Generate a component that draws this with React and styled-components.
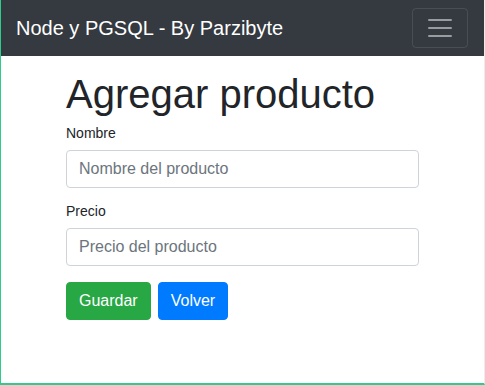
import React from "react";
import styled, { createGlobalStyle } from "styled-components";

const GlobalStyle = createGlobalStyle`
  * { box-sizing: border-box; }
  html, body { margin: 0; padding: 0; background: #fff; }
  body {
    font-family: "Liberation Sans", Arial, sans-serif;
    font-size: 16px;
    line-height: 1.5;
    color: #212529;
  }
`;

const Frame = styled.div`
  height: 385px;
  border-left: 1px solid #2ecc8a;
  border-bottom: 2px solid #2ecc8a;
  border-right: 1px solid #ececec;
`;

const NavBar = styled.nav`
  height: 56px;
  background-color: #343a40;
  padding: 8px 16px 8px 15px;
  display: flex;
  align-items: center;
  justify-content: space-between;
`;

const Brand = styled.a`
  color: #fff;
  font-size: 20px;
  line-height: 30px;
  text-decoration: none;
`;

const Toggler = styled.button`
  width: 56px;
  height: 40px;
  padding: 4px 12px;
  background: transparent;
  border: 1px solid rgba(255, 255, 255, 0.1);
  border-radius: 4px;
  display: flex;
  align-items: center;
  justify-content: center;
  svg { display: block; }
`;

const Main = styled.main`
  width: 353px;
  margin: 0 auto;
  padding-top: 14px;
`;

const Title = styled.h1`
  font-size: 40px;
  font-weight: 500;
  line-height: 48px;
  margin: 0 0 5px;
`;

const Group = styled.div`
  margin-bottom: 13px;
`;

const Label = styled.label`
  display: block;
  font-size: 14px;
  line-height: 21px;
  margin-bottom: 6px;
`;

const Input = styled.input`
  display: block;
  width: 100%;
  height: 38px;
  padding: 6px 12px;
  font-family: inherit;
  font-size: 16px;
  color: #495057;
  border: 1px solid #ced4da;
  border-radius: 4px;
  &::placeholder { color: #6c757d; }
`;

const Actions = styled.div`
  display: flex;
  gap: 7px;
  margin-top: 16px;
`;

const Button = styled.button`
  height: 38px;
  padding: 6px 12px;
  font-family: inherit;
  font-size: 16px;
  color: #fff;
  border: 1px solid ${(p) => p.$bg};
  background-color: ${(p) => p.$bg};
  border-radius: 4px;
`;

export default function App() {
  return (
    <>
      <GlobalStyle />
      <Frame>
        <NavBar>
          <Brand href="#">Node y PGSQL - By Parzibyte</Brand>
          <Toggler aria-label="menu">
            <svg width="30" height="30" viewBox="0 0 30 30">
              <path
                d="M4 7h22M4 15h22M4 23h22"
                stroke="rgba(255,255,255,0.5)"
                strokeWidth="2"
                strokeLinecap="round"
              />
            </svg>
          </Toggler>
        </NavBar>
        <Main>
          <Title>Agregar producto</Title>
          <form>
            <Group>
              <Label>Nombre</Label>
              <Input placeholder="Nombre del producto" />
            </Group>
            <Group>
              <Label>Precio</Label>
              <Input placeholder="Precio del producto" />
            </Group>
            <Actions>
              <Button type="button" $bg="#28a745">Guardar</Button>
              <Button type="button" $bg="#007bff">Volver</Button>
            </Actions>
          </form>
        </Main>
      </Frame>
    </>
  );
}
